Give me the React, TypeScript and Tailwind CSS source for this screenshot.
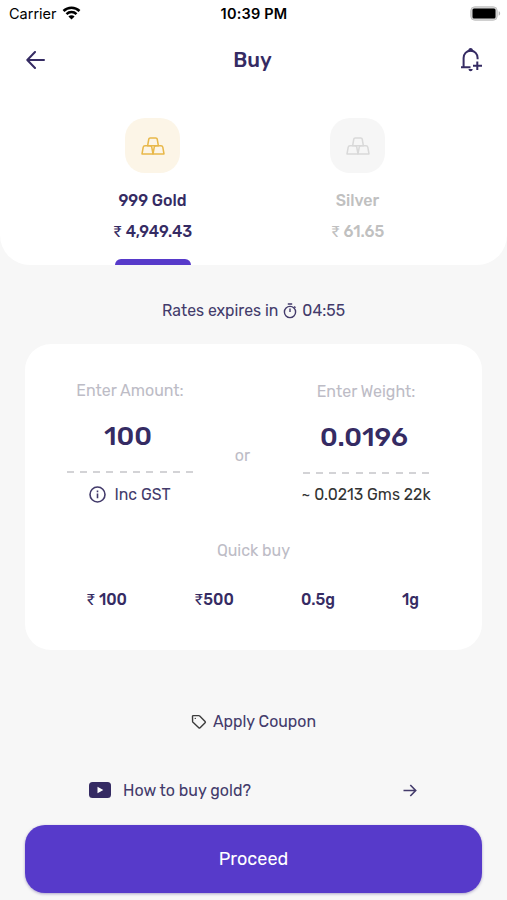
import type { ReactNode } from "react";

type Metal = {
  name: string;
  price: string;
  active: boolean;
};

const metals: Metal[] = [
  { name: "999 Gold", price: "4,949.43", active: true },
  { name: "Silver", price: "61.65", active: false }
];

function StatusBar() {
  return (
    <div className="grid h-7 grid-cols-3 items-center pl-[9px] pr-[6px] text-black">
      <div className="flex items-center gap-[5px]">
        <span className="font-['Inter'] text-[14.5px] leading-none">Carrier</span>
        <svg className="-mt-[2px]" width="19" height="14" viewBox="0 0 18 14" fill="none" stroke="#000" strokeWidth="2.5">
          <path d="M1 5a11.3 11.3 0 0 1 16 0" />
          <path d="M4 8.2a7 7 0 0 1 10 0" />
          <path d="M9 13.6 5.9 10.5a4.4 4.4 0 0 1 6.2 0Z" fill="#000" stroke="none" />
        </svg>
      </div>
      <span className="whitespace-nowrap pr-[2px] text-center font-['Inter'] text-[14.5px] font-semibold leading-none tracking-[0.2px]">
        10:39 PM
      </span>
      <svg className="-mt-[2px] justify-self-end" width="31" height="15" viewBox="0 0 31 15">
        <rect x="0.75" y="0.75" width="26.5" height="13.5" rx="4" fill="#d4d4d4" stroke="#c4c4c4" strokeWidth="1" />
        <rect x="2.5" y="2.5" width="23" height="10" rx="1.5" fill="#000" />
        <path d="M28.7 5.3c1.9.6 1.9 3.8 0 4.4z" fill="#b5b5b5" />
      </svg>
    </div>
  );
}

function BackIcon() {
  return (
    <svg className="-mt-px" width="19" height="18" viewBox="0 0 19 18" fill="none" stroke="#352b63" strokeWidth="2" strokeLinecap="round" strokeLinejoin="round">
      <path d="M9 1 1.3 9 9 17M1.5 9H18" />
    </svg>
  );
}

function BellPlusIcon() {
  return (
    <svg className="-mt-px" width="23" height="25" viewBox="0 0 23 25" fill="none" stroke="#352b63" strokeWidth="2">
      <path d="M1 20.200h9.500M3.600 20V11c0-4.100 2.800-7.200 7-7.200s7 3.100 7 7.200v1.200" />
      <path d="M7.700 4.400C8.300 2.200 9.200 1 10.600 1s2.300 1.200 2.900 3.400Z" fill="#352b63" stroke="none" />
      <path d="M17.300 14.500V23M13 18.800h9" />
      <path d="M8.500 22h4.200c-.2 1.500-1 2.200-2.100 2.200S8.700 23.500 8.500 22Z" fill="#352b63" stroke="none" />
    </svg>
  );
}

function BarsIcon({ color }: { color: string }) {
  return (
    <svg width="24" height="18" viewBox="0 0 24 18" fill="none" stroke={color} strokeWidth="1.5" strokeLinejoin="round">
      <path d="M9.200 1h5.600q1.200 0 1.400 1l1.200 6.800H6.600L7.800 2q.2-1 1.400-1Z" />
      <path d="M4 8.800h5q1.400 0 1.700 1.100l1.300 7.100H1l1.200-6.900q.3-1.300 1.800-1.300Z" />
      <path d="M15 8.800h5q1.500 0 1.800 1.300L23 17H12l1.300-7.100q.3-1.100 1.700-1.100Z" />
    </svg>
  );
}

function MetalTab({ name, price, active }: Metal) {
  return (
    <button
      className={`flex w-[205px] flex-col items-center font-medium ${
        active ? "text-[#352b63]" : "text-[#c0c0c0]"
      }`}
    >
      <span
        className={`flex h-[55px] w-[55px] items-center justify-center rounded-[20px] ${
          active ? "bg-[#fcf5e7]" : "bg-[#f6f6f6]"
        }`}
      >
        <BarsIcon color={active ? "#e8b84a" : "#d9d9d9"} />
      </span>
      <span className="mt-[18px] text-[16px] leading-5">{name}</span>
      <span className="mt-[11px] text-[15.8px] leading-5">
        <span className="font-normal">₹</span> {price}
      </span>
      <span className={`mt-[17px] h-[6px] w-[76px] rounded-t-[6px] ${active ? "bg-[#573aca]" : ""}`} />
    </button>
  );
}

function Dashes() {
  return (
    <div className="flex w-[127px] justify-between">
      {Array.from({ length: 10 }, (_, i) => (
        <span key={i} className="h-[2px] w-[7px] bg-[#d3d3d6]" />
      ))}
    </div>
  );
}

function AmountField({ label, value, children }: { label: string; value: string; children: ReactNode }) {
  return (
    <div className="flex w-[140px] flex-col items-center">
      <span className="whitespace-nowrap text-[16px] leading-5 text-[#bdbcc6]">{label}</span>
      <span className="mt-[18px] mb-[18px] pr-[4px] text-[27px] font-medium leading-[34px] text-[#352b63]">{value}</span>
      <Dashes />
      <div className="mt-[12px] flex h-5 items-center gap-[8px] whitespace-nowrap text-[15.8px] leading-5">{children}</div>
    </div>
  );
}

function QuickBuy() {
  return (
    <div className="mt-[29px] flex text-[15.8px] font-medium leading-5 text-[#352b63]">
      <span className="ml-[61px] w-[108px]">
        <span className="font-normal">₹</span> 100
      </span>
      <span className="w-[107px]">
        <span className="font-normal">₹</span>500
      </span>
      <span className="w-[101px]">0.5g</span>
      <span>1g</span>
    </div>
  );
}

export default function App() {
  return (
    <main className="flex h-[900px] w-[507px] flex-col overflow-hidden bg-[#f7f7f7] font-['Rubik','Roboto',sans-serif] text-[#433b6b]">
      <header className="h-[265px] shrink-0 rounded-b-[30px] bg-white">
        <StatusBar />
        <div className="flex h-16 items-center justify-between pl-[26px] pr-[24px] text-[#352b63]">
          <BackIcon />
          <h1 className="text-[20.500px] font-medium">Buy</h1>
          <BellPlusIcon />
        </div>
        <nav className="mt-[26px] flex pl-[50px]">
          {metals.map((metal) => (
            <MetalTab key={metal.name} {...metal} />
          ))}
        </nav>
      </header>

      <div className="mt-[36px] flex h-5 items-center justify-center gap-[5px] text-[15.8px] leading-5">
        <span>Rates expires in</span>
        <svg width="14" height="16" viewBox="0 0 14 16" fill="none" stroke="#433b6b" strokeWidth="1.4">
          <circle cx="7" cy="9" r="5.600" />
          <path d="M4.800 1h4.400M7 5.500V9M11.200 3.600l1.300 1.200" />
        </svg>
        <span>04:55</span>
      </div>

      <section className="mx-[25px] mt-[23px] h-[306px] shrink-0 rounded-[26px] bg-white">
        <div className="flex pt-[37px] pl-[35px]">
          <AmountField label="Enter Amount:" value="100">
            <svg className="-mt-px" width="17" height="17" viewBox="0 0 17 17" fill="none" stroke="#433b6b" strokeWidth="1.6">
              <circle cx="8.500" cy="8.500" r="7.500" />
              <path d="M8.500 7.400v4.800M8.500 4.600v1.600" />
            </svg>
            <span>Inc GST</span>
          </AmountField>
          <span className="mt-[65px] w-[96px] pr-[11px] text-center text-[16px] leading-5 text-[#bdbcc6]">or</span>
          <div className="mt-px">
            <AmountField label="Enter Weight:" value="0.0196">
              <span className="-mt-[2px] text-[#333]">~ 0.0213 Gms 22k</span>
            </AmountField>
          </div>
        </div>
        <p className="mt-[35px] text-center text-[16px] leading-5 text-[#bdbcc6]">Quick buy</p>
        <QuickBuy />
      </section>

      <button className="mt-[62px] flex h-5 items-center justify-center gap-[6px] text-[15.900px] leading-5">
        <svg className="-mt-px" width="16" height="16" viewBox="0 0 16 16" fill="none" stroke="#3c3c3c" strokeWidth="1.400" strokeLinejoin="round">
          <path d="M1.500 2.600q0-1 1-1h5.300q.5 0 .9.400l5.400 5.500q.6.700 0 1.300l-5 5q-.7.600-1.300 0L2 8.300q-.4-.4-.4-.9Z" />
          <circle cx="4.300" cy="4.400" r="0.700" fill="#3c3c3c" stroke="none" />
        </svg>
        <span>Apply Coupon</span>
      </button>

      <a className="mt-[49px] flex h-5 items-center pl-[89px] pr-[90px] text-[16px] leading-5">
        <svg className="-mt-[2px]" width="22" height="16" viewBox="0 0 22 16">
          <rect width="22" height="16" rx="3.500" fill="#352b63" />
          <path d="m8.500 4.800 5.800 3.200-5.800 3.200Z" fill="#fff" />
        </svg>
        <span className="ml-[12px] flex-1">How to buy gold?</span>
        <svg className="-mt-[2px]" width="14" height="13" viewBox="0 0 14 13" fill="none" stroke="#433b6b" strokeWidth="1.600">
          <path d="M.5 6.500h12M7.300 1l5.400 5.500L7.300 12" />
        </svg>
      </a>

      <button className="mx-[25px] mt-[24px] h-[68px] shrink-0 rounded-[20px] bg-[#573aca] text-[18px] text-white shadow-[0_1px_3px_rgba(60,40,130,0.4)]">
        Proceed
      </button>
    </main>
  );
}
